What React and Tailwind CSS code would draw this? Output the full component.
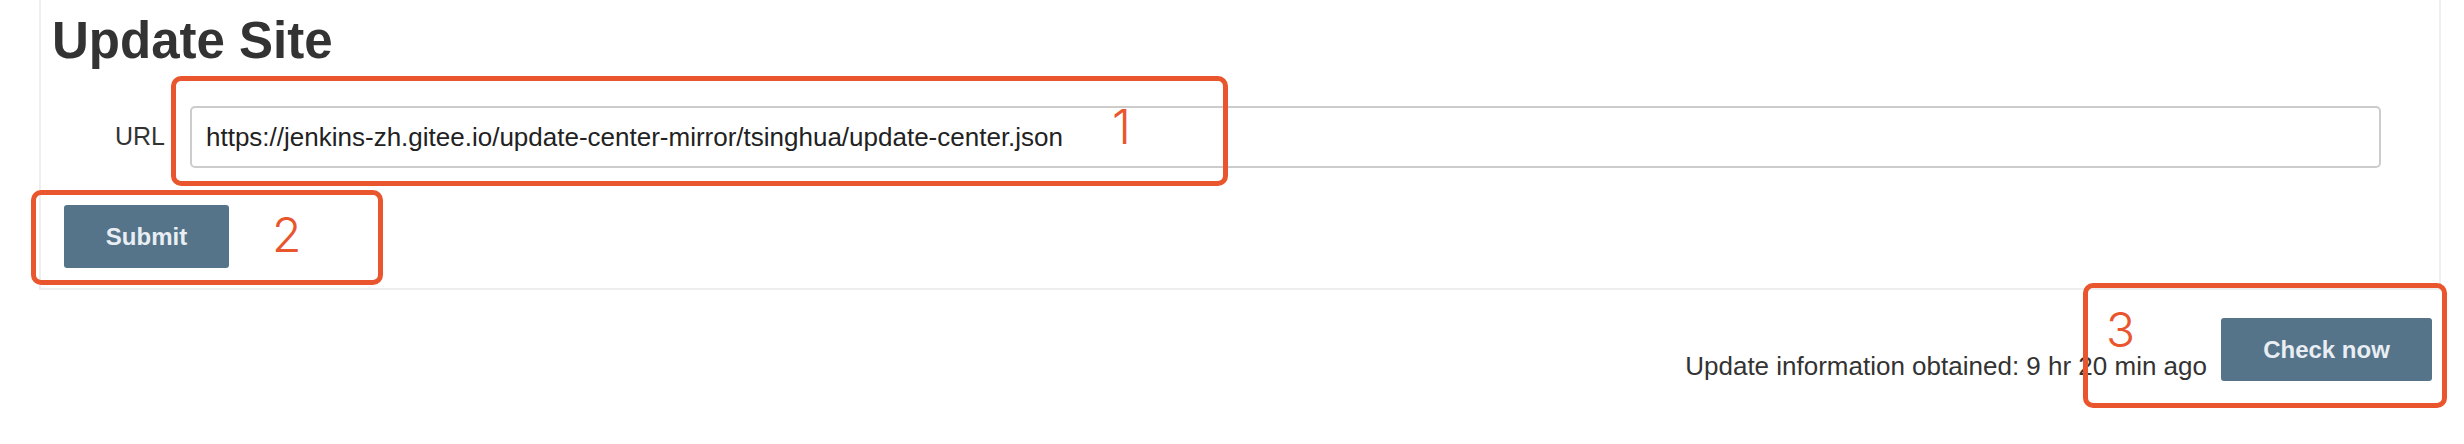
import React from "react";

const marks = [
  { id: 1, box: "left-[171px] top-[76px] w-[1057px] h-[110px]", num: "left-[1112px] top-[103px]" },
  { id: 2, box: "left-[31px] top-[190px] w-[352px] h-[95px]", num: "left-[272px] top-[211px]" },
  { id: 3, box: "left-[2083px] top-[283px] w-[364px] h-[125px]", num: "left-[2106px] top-[306px]" },
];

export default function App() {
  return (
    <div className="relative h-[444px] w-[2464px] overflow-hidden bg-white font-['Liberation_Sans',Arial,sans-serif] text-[#333]">
      <div className="ml-[39px] w-[2402px] border-x-2 border-b-2 border-[#eeeeee] bg-white pb-[20px]">
        <h1 className="pl-[11px] pt-[15px] text-[51px] font-bold leading-none text-[#333]">Update Site</h1>

        <div className="mt-[40px] flex items-center pr-[58px]">
          <label className="w-[124px] text-right text-[25px] text-[#333]">URL</label>
          <input
            className="ml-[25px] h-[62px] flex-1 rounded-[5px] border-2 border-[#cccccc] px-[14px] text-[26px] text-[#222] outline-none"
            defaultValue="https://jenkins-zh.gitee.io/update-center-mirror/tsinghua/update-center.json"
          />
        </div>

        <div className="mt-[37px] pl-[23px]">
          <button className="h-[63px] w-[165px] rounded-[3px] bg-[#557489] text-[24px] font-bold text-[#e8eef3]">
            Submit
          </button>
        </div>
      </div>

      <div className="mt-[28px] flex items-end justify-end pr-[32px]">
        <span className="mr-[14px] text-[26px] leading-[30px] text-[#333]">
          Update information obtained: 9 hr 20 min ago
        </span>
        <button className="h-[63px] w-[211px] rounded-[3px] bg-[#557489] text-[24px] font-bold text-[#e8eef3]">
          Check now
        </button>
      </div>

      {marks.map(m => (
        <React.Fragment key={m.id}>
          <div className={`absolute rounded-[10px] border-[5px] border-[#e9552d] ${m.box}`}></div>
          <div
            className={`absolute font-['Inter',sans-serif] text-[48px] font-light leading-none text-[#e9552d] ${m.num}`}
          >
            {m.id}
          </div>
        </React.Fragment>
      ))}
    </div>
  );
}
